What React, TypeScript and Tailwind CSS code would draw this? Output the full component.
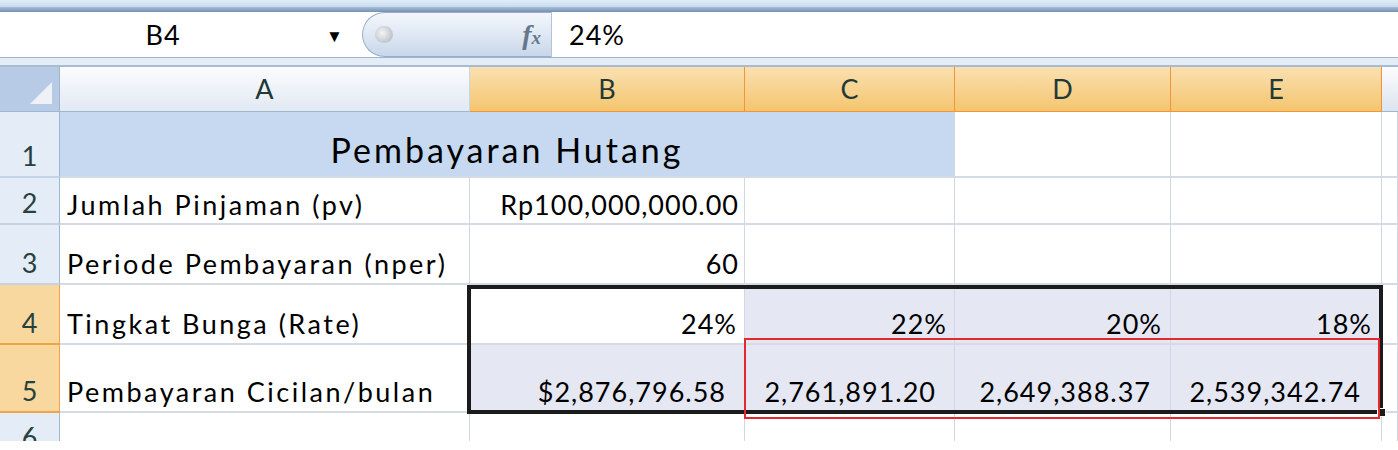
import React from "react";

type CellProps = {
  w: string;
  children?: React.ReactNode;
  className?: string;
};

function Cell({ w, children, className = "" }: CellProps) {
  return (
    <div
      className={`${w} shrink-0 h-full flex items-end border-r border-b-2 border-r-[#d0d7e5] border-b-[#d5dae5] leading-none ${className}`}
    >
      {children}
    </div>
  );
}

function RowHead({ n, active = false }: { n: string; active?: boolean }) {
  return (
    <div
      className={
        active
          ? "w-[60px] shrink-0 h-full flex items-end justify-center pb-[7px] leading-none bg-[#f8d89e] border-r border-b-2 border-[#f0a446] text-[#27413e] tracking-normal"
          : "w-[60px] shrink-0 h-full flex items-end justify-center pb-[7px] leading-none bg-[#e4ecf7] border-r border-b-2 border-r-[#9eb6ce] border-b-[#c5d3e4] text-[#27413e] tracking-normal"
      }
    >
      {n}
    </div>
  );
}

export default function App() {
  return (
    <div className="w-[1398px] h-[450px] bg-white overflow-hidden font-['Lato',sans-serif] text-[27px] tracking-[1px] text-black">
      {/* RIBBON EDGE */}
      <div className="h-[7px] bg-gradient-to-b from-[#e2eef8] to-[#c6dbef]" />
      <div className="h-[5px] bg-gradient-to-b from-[#a9bed6] to-[#7590b2]" />

      {/* FORMULA BAR */}
      <div className="flex h-[46px] bg-white border-b border-[#9db2cb]">
        <div className="w-[362px] flex items-center">
          <span className="w-[326px] text-center leading-none">B4</span>
          <span className="text-[17px] leading-none mt-[2px]">▼</span>
        </div>
        <div className="w-[189px] flex items-center justify-between rounded-l-[26px] border border-r-0 border-[#98aeca] bg-gradient-to-b from-[#f3f7fc] via-[#dfe8f4] to-[#c8d7ea] pl-[12px] pr-[10px]">
          <span className="w-[18px] h-[17px] rounded-full bg-[radial-gradient(circle_at_40%_40%,#f4f4f4,#a9b1bc)]" />
          <span className="font-['Liberation_Serif',serif] italic font-bold text-[28px] leading-none text-[#67778b] tracking-normal">
            f<span className="text-[19px]">x</span>
          </span>
        </div>
        <div className="flex-1 flex items-center pl-[17px] border-l border-[#b4c4d8] leading-none">
          24%
        </div>
      </div>
      <div className="h-[9px] bg-[#e4ecf6] border-b-2 border-[#a7bbd3]" />

      {/* GRID */}
      <div className="relative">
        {/* column headers */}
        <div className="flex h-[45px] text-[#1f3a37] tracking-normal">
          <div className="w-[60px] shrink-0 flex items-end justify-end bg-[#b7cbe6] border-r border-b border-[#9eb6ce] pr-[7px] pb-[7px]">
            <div className="w-0 h-0 border-l-[22px] border-l-transparent border-b-[22px] border-b-[#eef2f7]" />
          </div>
          <div className="w-[410px] shrink-0 flex items-center justify-center bg-gradient-to-b from-[#fbfcfe] to-[#e2e9f3] border-r border-b border-[#c9d5e4] border-b-[#9eb6ce]">
            A
          </div>
          <div className="w-[275px] shrink-0 flex items-center justify-center bg-gradient-to-b from-[#fae0b0] to-[#f4c56e] border-r border-b border-[#f29536]">
            B
          </div>
          <div className="w-[210px] shrink-0 flex items-center justify-center bg-gradient-to-b from-[#fae0b0] to-[#f4c56e] border-r border-b border-[#f29536]">
            C
          </div>
          <div className="w-[216px] shrink-0 flex items-center justify-center bg-gradient-to-b from-[#fae0b0] to-[#f4c56e] border-r border-b border-[#f29536]">
            D
          </div>
          <div className="w-[211px] shrink-0 flex items-center justify-center bg-gradient-to-b from-[#fae0b0] to-[#f4c56e] border-r border-b border-[#f29536]">
            E
          </div>
          <div className="flex-1 bg-gradient-to-b from-[#fbfcfe] to-[#dde4ee] border-b border-[#9eb6ce]" />
        </div>

        {/* row 1 */}
        <div className="flex h-[66px]">
          <RowHead n="1" />
          <div className="w-[895px] shrink-0 h-full flex items-end justify-center pb-[9px] bg-[#c6d9f0] border-r border-b-2 border-r-[#d0d7e5] border-b-[#d5dae5] text-[34px] leading-none tracking-[3px]">
            Pembayaran Hutang
          </div>
          <Cell w="w-[216px]" />
          <Cell w="w-[211px]" />
          <Cell w="flex-1" />
        </div>

        {/* row 2 */}
        <div className="flex h-[47px]">
          <RowHead n="2" />
          <Cell w="w-[410px]" className="pl-[7px] pb-[5px] tracking-[2.5px]">Jumlah Pinjaman (pv)</Cell>
          <Cell w="w-[275px]" className="justify-end pr-[5px] pb-[5px]">Rp100,000,000.00</Cell>
          <Cell w="w-[210px]" />
          <Cell w="w-[216px]" />
          <Cell w="w-[211px]" />
          <Cell w="flex-1" />
        </div>

        {/* row 3 */}
        <div className="flex h-[60px]">
          <RowHead n="3" />
          <Cell w="w-[410px]" className="pl-[7px] pb-[6px] tracking-[2.5px]">Periode Pembayaran (nper)</Cell>
          <Cell w="w-[275px]" className="justify-end pr-[5px] pb-[6px]">60</Cell>
          <Cell w="w-[210px]" />
          <Cell w="w-[216px]" />
          <Cell w="w-[211px]" />
          <Cell w="flex-1" />
        </div>

        {/* row 4 */}
        <div className="flex h-[60px]">
          <RowHead n="4" active />
          <Cell w="w-[410px]" className="pl-[7px] pb-[6px] tracking-[2.5px]">Tingkat Bunga (Rate)</Cell>
          <Cell w="w-[275px]" className="justify-end pr-[7px] pb-[6px]">24%</Cell>
          <Cell w="w-[210px]" className="justify-end pr-[7px] pb-[6px] bg-[#e5e8f3]">22%</Cell>
          <Cell w="w-[216px]" className="justify-end pr-[8px] pb-[6px] bg-[#e5e8f3]">20%</Cell>
          <Cell w="w-[211px]" className="justify-end pr-[9px] pb-[6px] bg-[#e5e8f3]">18%</Cell>
          <Cell w="flex-1" />
        </div>

        {/* row 5 */}
        <div className="flex h-[68px]">
          <RowHead n="5" active />
          <Cell w="w-[410px]" className="pl-[7px] pb-[6px] tracking-[2.5px]">Pembayaran Cicilan/bulan</Cell>
          <Cell w="w-[275px]" className="justify-end pr-[18px] pb-[6px] bg-[#e5e8f3]">$2,876,796.58</Cell>
          <Cell w="w-[210px]" className="justify-end pr-[18px] pb-[6px] bg-[#e5e8f3]">2,761,891.20</Cell>
          <Cell w="w-[216px]" className="justify-end pr-[19px] pb-[6px] bg-[#e5e8f3]">2,649,388.37</Cell>
          <Cell w="w-[211px]" className="justify-end pr-[20px] pb-[6px] bg-[#e5e8f3]">2,539,342.74</Cell>
          <Cell w="flex-1" />
        </div>

        {/* row 6, cut off at the bottom of the window */}
        <div className="h-[28px] overflow-hidden">
          <div className="flex h-[46px]">
            <RowHead n="6" />
            <Cell w="w-[410px]" />
            <Cell w="w-[275px]" />
            <Cell w="w-[210px]" />
            <Cell w="w-[216px]" />
            <Cell w="w-[211px]" />
            <Cell w="flex-1" />
          </div>
        </div>

        {/* selection border B4:E5 */}
        <div className="absolute left-[467px] top-[218px] w-[916px] h-[129px] border-[4px] border-[#1b1b1b]" />
        <div className="absolute left-[1377px] top-[341px] w-[9px] h-[9px] bg-[#1b1b1b] border border-white" />

        {/* red annotation box */}
        <div className="absolute left-[744px] top-[271px] w-[636px] h-[81px] border-2 border-[#e5282e]" />
      </div>
    </div>
  );
}
